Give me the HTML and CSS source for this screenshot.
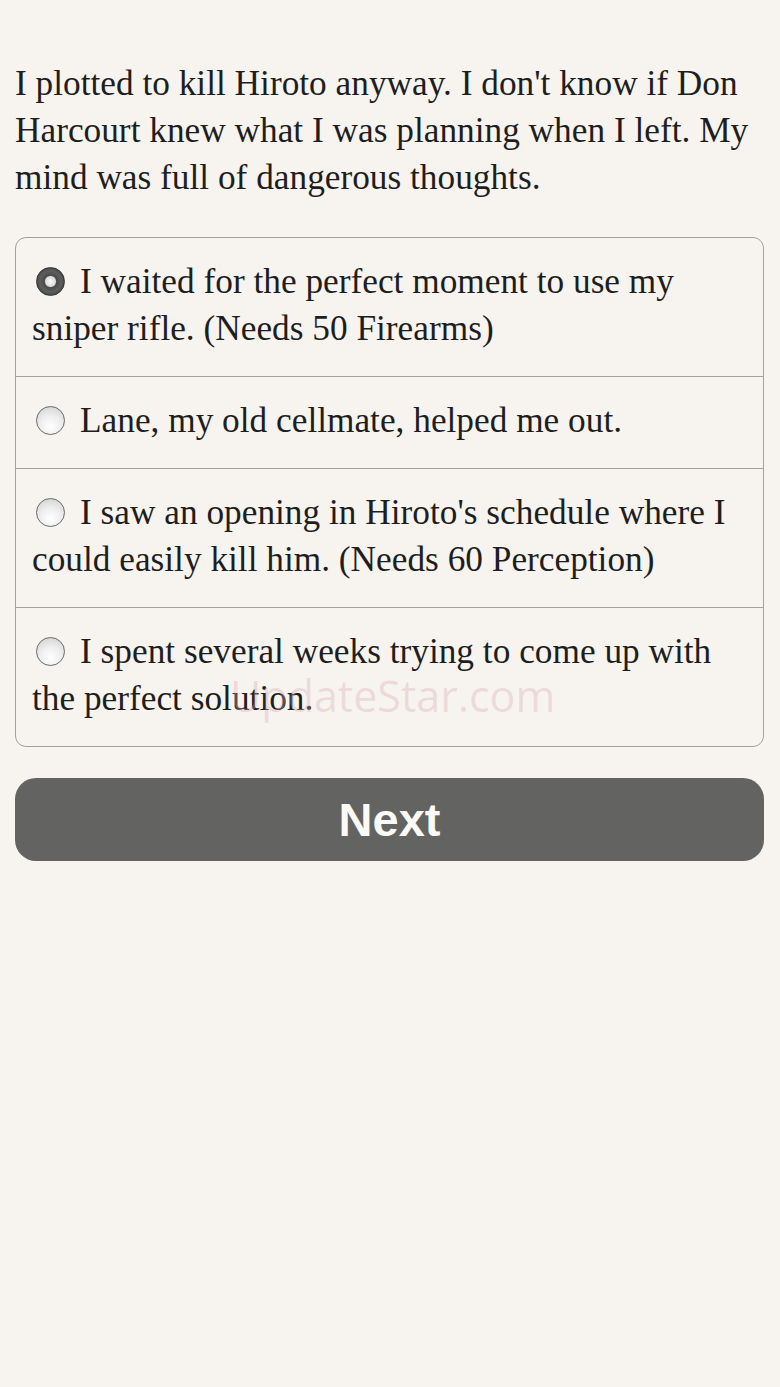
FILE: index.html
```html
<!DOCTYPE html>
<html>
<head>
<meta charset="utf-8">
<link rel="stylesheet" href="styles.css">
</head>
<body>
<div class="page">
  <p class="story">I plotted to kill Hiroto anyway. I don't know if Don Harcourt knew what I was planning when I left. My mind was full of dangerous thoughts.</p>
  <div class="choices">
    <label class="choice"><span class="radio selected"></span>I waited for the perfect moment to use my sniper rifle. (Needs 50 Firearms)</label>
    <label class="choice"><span class="radio"></span>Lane, my old cellmate, helped me out.</label>
    <label class="choice"><span class="radio"></span>I saw an opening in Hiroto's schedule where I could easily kill him. (Needs 60 Perception)</label>
    <label class="choice"><span class="radio"></span>I spent several weeks trying to come up with the perfect solution.<span class="watermark">UpdateStar.com</span></label>
  </div>
  <button class="next">Next</button>
</div>
</body>
</html>
```
FILE: styles.css
```css
html, body {
  margin: 0;
  padding: 0;
  background: #f7f4f0;
}
.page {
  padding: 60px 16px 0 15px;
}
.story {
  margin: 0 0 36px 0;
  font-family: "Liberation Serif", serif;
  font-size: 35.3px;
  line-height: 47px;
  color: #1e1e1e;
}
.choices {
  border: 1px solid #a3a19e;
  border-radius: 11px;
  overflow: hidden;
  position: relative;
}
.choice {
  display: block;
  position: relative;
  padding: 20px 16px 24px 16px;
  font-family: "Liberation Serif", serif;
  font-size: 35.3px;
  line-height: 47px;
  color: #1e1e1e;
  border-top: 1px solid #a3a19e;
}
.choice:first-child {
  border-top: none;
}
.radio {
  display: inline-block;
  width: 29px;
  height: 29px;
  border-radius: 50%;
  box-sizing: border-box;
  border: 1.5px solid #6a6a6a;
  background: radial-gradient(circle at 50% 72%, #ffffff 0%, #eeeeee 45%, #cdcdcd 100%);
  margin: 0 15px 0 4px;
  vertical-align: -3px;
}
.radio.selected {
  border: 1px solid #333;
  background: radial-gradient(circle at 50% 50%, #fafafa 0%, #dcdcdc 26%, #4a4a4a 32%, #5e5e5e 55%, #2a2a2a 100%);
}
.watermark {
  position: absolute;
  left: 214px;
  top: 64px;
  font-family: "Open Sans", sans-serif;
  font-size: 43px;
  line-height: 47px;
  color: rgba(215, 170, 180, 0.35);
  pointer-events: none;
}
.next {
  display: block;
  width: 100%;
  margin-top: 31px;
  height: 83px;
  border: none;
  border-radius: 21px;
  background: #636361;
  color: #fbfaf7;
  font-family: "Liberation Sans", Arial, sans-serif;
  font-weight: bold;
  font-size: 47px;
}
```
